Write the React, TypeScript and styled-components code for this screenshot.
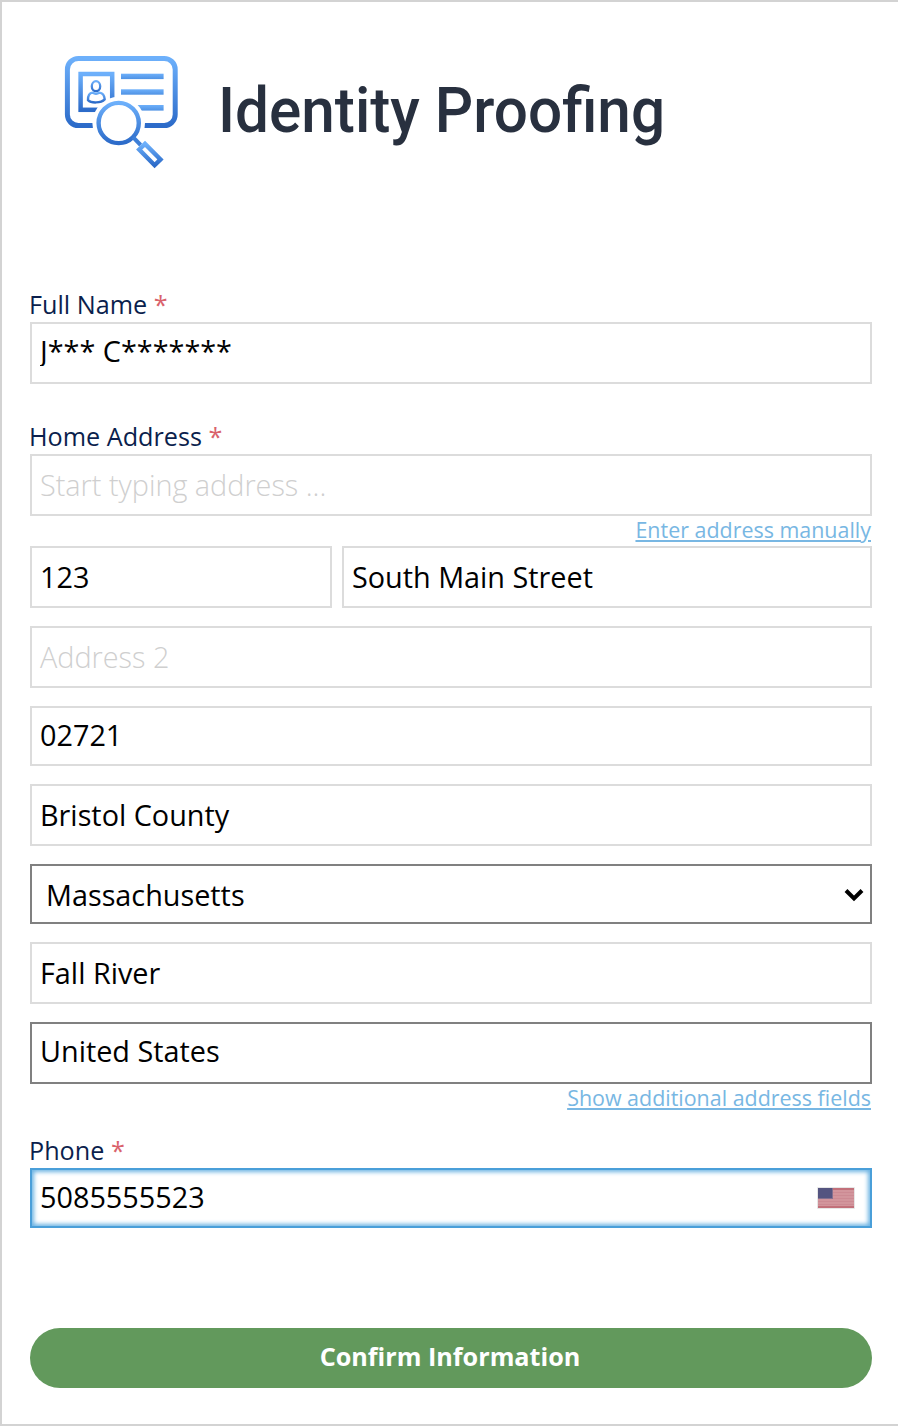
import React from "react";
import styled, { createGlobalStyle } from "styled-components";

const GlobalStyle = createGlobalStyle`
  *, *::before, *::after { box-sizing: border-box; }
  body { margin: 0; background: #fff; }
`;

const Page = styled.main`
  width: 898px;
  height: 1426px;
  padding: 0 26px 0 28px;
  border: solid #d3d3d3;
  border-width: 2px 0 2px 2px;
  background: #fff;
  font-family: "Open Sans", sans-serif;
  overflow: hidden;
`;

const Header = styled.header`
  display: flex;
  height: 284px;
  padding: 48px 0 0 30px;
`;

const Logo = styled.svg`
  display: block;
  flex: none;
  width: 130px;
  height: 130px;
`;

const Title = styled.h1`
  margin: 23px 0 0 28px;
  font: 500 62.5px/76px Roboto, sans-serif;
  color: #28303f;
  white-space: nowrap;
  transform: scaleX(0.964);
  transform-origin: 0 50%;
`;

const Label = styled.label`
  display: block;
  height: 36px;
  margin-left: -1px;
  font-size: 25.2px;
  line-height: 36px;
  color: #0b1f4d;
`;

const Required = styled.span`
  color: #d9626b;
`;

const Group = styled.section<{ $after?: number }>`
  margin-bottom: ${(p) => p.$after ?? 0}px;
`;

const Stack = styled.div`
  display: flex;
  flex-direction: column;
  gap: 18px;
`;

const Row = styled.div`
  display: grid;
  grid-template-columns: 302px 1fr;
  gap: 10px;
`;

const Field = styled.div<{ $short?: boolean; $raised?: boolean; $dark?: boolean; $focused?: boolean }>`
  display: flex;
  justify-content: space-between;
  height: ${(p) => (p.$short ? 60 : 62)}px;
  padding: ${(p) => (p.$raised ? 7 : 9)}px 8px 0;
  border: 2px solid ${(p) => (p.$focused ? "#4a9fd9" : p.$dark ? "#808080" : "#dcdcdc")};
  box-shadow: ${(p) => (p.$focused ? "inset 0 0 4px 2px #6bb3e3" : "none")};
  background: #fff;
`;

const Value = styled.span<{ $indent?: number; $clip?: boolean }>`
  height: ${(p) => (p.$clip ? "35px" : "39px")};
  margin-left: ${(p) => p.$indent ?? 0}px;
  overflow: ${(p) => (p.$clip ? "hidden" : "visible")};
  font-size: 28.8px;
  line-height: 39px;
  color: #000;
  white-space: nowrap;
`;

const Placeholder = styled(Value)`
  font-weight: 300;
  color: #cfcfcf;
`;

const LinkRow = styled.div<{ $height: number }>`
  display: flex;
  justify-content: flex-end;
  height: ${(p) => p.$height}px;
  padding-right: 1px;
`;

const TextLink = styled.a`
  font-size: 21.44px;
  line-height: 27px;
  color: #78b7e3;
  text-decoration: underline;
  text-decoration-thickness: 2px;
  text-underline-offset: 2px;
`;

const Chevron = styled.svg`
  width: 20px;
  height: 14px;
  margin: 13px -2px 0 0;
`;

const Flag = styled.svg`
  width: 38px;
  height: 22px;
  margin: 10px 7px 0 0;
`;

const Submit = styled.button`
  display: block;
  width: 100%;
  height: 60px;
  margin: 0;
  padding: 0 2px 4px 0;
  border: 0;
  border-radius: 30px;
  background: #62995c;
  color: #fff;
  font: 700 25.2px/34px "Open Sans", sans-serif;
`;

function IdentityLogo() {
  return (
    <Logo viewBox="60 50 130 130" fill="none" aria-hidden="true">
      <defs>
        <linearGradient id="blue" x1="0" y1="0" x2="0" y2="1">
          <stop offset="0" stopColor="#6db0fb" />
          <stop offset="1" stopColor="#2c6bc9" />
        </linearGradient>
        <linearGradient id="bar" x1="0" y1="0" x2="0" y2="1">
          <stop offset="0" stopColor="#6db0fb" />
          <stop offset="1" stopColor="#4f92e4" />
        </linearGradient>
      </defs>
      <rect x="67.4" y="58.4" width="107.8" height="67.2" rx="11" stroke="url(#blue)" strokeWidth="5" />
      <rect x="80.6" y="74" width="31.6" height="35.8" stroke="url(#blue)" strokeWidth="4.5" />
      <rect x="121" y="73.7" width="42.6" height="5.4" fill="url(#bar)" />
      <rect x="121" y="89.3" width="42.6" height="5.4" fill="url(#bar)" />
      <rect x="121" y="105" width="42.6" height="5.6" fill="url(#bar)" />
      <circle cx="118.7" cy="123" r="26.3" fill="#fff" />
      <ellipse cx="96" cy="86.2" rx="4.2" ry="5" stroke="url(#blue)" strokeWidth="2.3" />
      <path
        d="M92.5 92.6C89.2 92.9 87.9 95.6 88 100.2C91 103.2 100.8 103.4 104.7 99.4C104.4 95.4 102.6 92.9 99.4 92.6C97.3 94 94.7 94 92.5 92.6Z"
        stroke="url(#blue)"
        strokeWidth="2.4"
        strokeLinejoin="round"
      />
      <circle cx="118.7" cy="123" r="20.1" stroke="url(#blue)" strokeWidth="4.4" />
      <path d="M133 137.2L140.6 145" stroke="#3c7ed7" strokeWidth="4" />
      <path d="M145 143.9L160.5 159.4L154.6 165.2L139.2 149.5Z" stroke="url(#blue)" strokeWidth="4.4" />
    </Logo>
  );
}

function UsFlag() {
  return (
    <Flag viewBox="0 0 38 22" aria-hidden="true">
      <rect width="38" height="22" rx="1" fill="#e6e6e6" />
      <rect x="1" y="1" width="36" height="20" fill="#d2959c" />
      <path d="M1 2H37M1 20H37" stroke="#c2707a" strokeWidth="2" />
      <path d="M1 5.5H37M1 8.5H37M1 11.5H37M1 14.5H37M1 17.5H37" stroke="#cc8a93" />
      <rect x="1" y="1" width="15" height="11" fill="#84708f" />
      <rect x="1" y="1" width="14" height="10" fill="#545480" />
    </Flag>
  );
}

export default function App() {
  return (
    <>
      <GlobalStyle />
      <Page>
        <Header>
          <IdentityLogo />
          <Title>Identity Proofing</Title>
        </Header>
        <Group $after={34}>
          <Label>
            Full Name <Required>*</Required>
          </Label>
          <Field $raised>
            <Value $clip>J*** C*******</Value>
          </Field>
        </Group>
        <Group>
          <Label>
            Home Address <Required>*</Required>
          </Label>
          <Field>
            <Placeholder>Start typing address ...</Placeholder>
          </Field>
          <LinkRow $height={30}>
            <TextLink>Enter address manually</TextLink>
          </LinkRow>
          <Stack>
            <Row>
              <Field>
                <Value>123</Value>
              </Field>
              <Field>
                <Value>South Main Street</Value>
              </Field>
            </Row>
            <Field>
              <Placeholder>Address 2</Placeholder>
            </Field>
            <Field $short $raised>
              <Value>02721</Value>
            </Field>
            <Field>
              <Value>Bristol County</Value>
            </Field>
            <Field $short $dark>
              <Value $indent={6}>Massachusetts</Value>
              <Chevron viewBox="0 0 20 14" aria-hidden="true">
                <path d="M2 2.5L10 10.5L18 2.5" fill="none" stroke="#000" strokeWidth="4" />
              </Chevron>
            </Field>
            <Field>
              <Value>Fall River</Value>
            </Field>
            <Field $raised $dark>
              <Value>United States</Value>
            </Field>
          </Stack>
          <LinkRow $height={48}>
            <TextLink>Show additional address fields</TextLink>
          </LinkRow>
        </Group>
        <Group $after={100}>
          <Label>
            Phone <Required>*</Required>
          </Label>
          <Field $short $raised $focused>
            <Value>5085555523</Value>
            <UsFlag />
          </Field>
        </Group>
        <Submit>Confirm Information</Submit>
      </Page>
    </>
  );
}
